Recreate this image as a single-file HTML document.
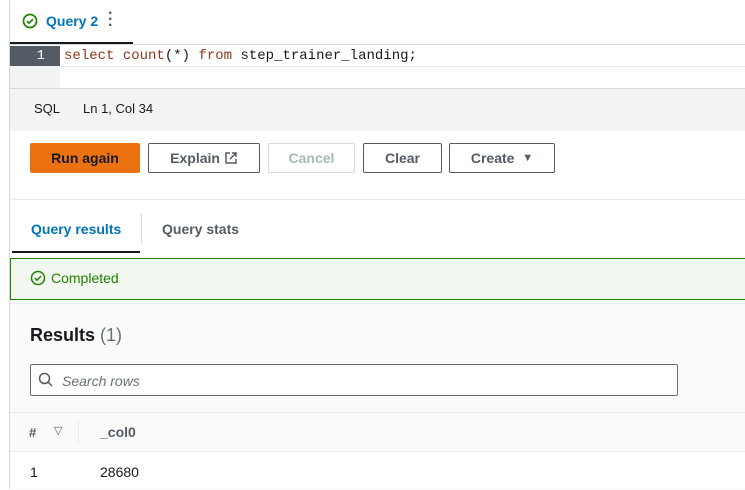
<!DOCTYPE html><html><head><style>
body{margin:0;width:745px;height:489px;overflow:hidden;background:#fff;font-family:"Liberation Sans",sans-serif;position:relative;font-size:14px;color:#16191f}
.a{position:absolute}
.btn{position:absolute;top:143px;height:30px;border:1px solid #545b64;border-radius:2px;box-sizing:border-box;font-weight:bold;font-size:14px;display:flex;align-items:center;justify-content:center;color:#545b64;background:#fff}
</style></head><body>
<div class="a" style="left:9px;top:0;width:1px;height:489px;background:#d5dbdb"></div>
<div class="a" style="left:10px;top:0;width:735px;height:44px;background:#fff"></div>
<svg class="a" style="left:22px;top:13px" width="16" height="16" viewBox="0 0 16 16"><circle cx="8" cy="8" r="6.5" fill="none" stroke="#1d8102" stroke-width="1.7"/><path d="M5 8.2l2 2 4-4" fill="none" stroke="#1d8102" stroke-width="1.7"/></svg>
<div class="a" style="left:46px;top:13px;font-weight:bold;color:#0073bb;font-size:14px">Query 2</div>
<div class="a" style="left:108px;top:11px;font-weight:bold;color:#545b64;font-size:16px;line-height:6px">·<br>·<br>·</div>
<div class="a" style="left:10px;top:42px;width:123px;height:2px;background:#16191f"></div>
<div class="a" style="left:10px;top:44px;width:735px;height:1px;background:#d5dbdb"></div>
<div class="a" style="left:10px;top:46px;width:50px;height:20px;background:#545b64;color:#fff;font-family:'Liberation Mono',monospace;font-size:14px;text-align:right;line-height:20px;padding-right:15px;box-sizing:border-box">1</div>
<div class="a" style="left:60px;top:46px;width:685px;height:20px;border-bottom:1px solid #eaeded"></div>
<div class="a" style="left:64px;top:46px;line-height:20px;font-family:'Liberation Mono',monospace;font-size:14px;color:#16191f"><span style="color:#8b3a1c">select</span> <span style="color:#8b3a1c">count</span>(*) <span style="color:#8b3a1c">from</span> step_trainer_landing;</div>
<div class="a" style="left:10px;top:66px;width:50px;height:22px;background:#f2f3f3"></div>
<div class="a" style="left:10px;top:88px;width:735px;height:42px;background:#f2f3f3;border-top:1px solid #d5dbdb"></div>
<div class="a" style="left:34px;top:101px;font-size:13px">SQL</div>
<div class="a" style="left:83px;top:101px;font-size:13px">Ln 1, Col 34</div>
<div class="btn" style="left:30px;width:110px;background:#ec7211;border-color:#ec7211;color:#16191f">Run again</div>
<div class="btn" style="left:148px;width:112px">Explain&nbsp;<svg width="14" height="14" viewBox="0 0 14 14"><path d="M6 2H2v10h10V8M8 2h4v4M12 2L6 8" fill="none" stroke="#545b64" stroke-width="1.5"/></svg></div>
<div class="btn" style="left:268px;width:87px;border-color:#d5dbdb;color:#aab7b8">Cancel</div>
<div class="btn" style="left:363px;width:79px">Clear</div>
<div class="btn" style="left:449px;width:106px">Create&nbsp;&nbsp;<span style="font-size:11px">▼</span></div>
<div class="a" style="left:10px;top:199px;width:735px;height:1px;background:#eaeded"></div>
<div class="a" style="left:31px;top:221px;font-weight:bold;color:#0073bb;font-size:14px">Query results</div>
<div class="a" style="left:141px;top:214px;width:1px;height:30px;background:#d5dbdb"></div>
<div class="a" style="left:162px;top:221px;font-weight:bold;color:#545b64;font-size:14px">Query stats</div>
<div class="a" style="left:12px;top:251px;width:128px;height:2px;background:#16191f"></div>
<div class="a" style="left:10px;top:258px;width:740px;height:42px;background:#f2f8f0;border:1px solid #1d8102;box-sizing:border-box"></div>
<svg class="a" style="left:30px;top:270px" width="16" height="16" viewBox="0 0 16 16"><circle cx="8" cy="8" r="6.5" fill="none" stroke="#1d8102" stroke-width="1.5"/><path d="M5 8.2l2 2 4-4" fill="none" stroke="#1d8102" stroke-width="1.5"/></svg>
<div class="a" style="left:51px;top:270px;color:#1d8102;font-size:14px">Completed</div>
<div class="a" style="left:10px;top:303px;width:735px;height:186px;background:#fafafa;border-top:1px solid #eaeded"></div>
<div class="a" style="left:30px;top:325px;font-size:18px;font-weight:bold">Results <span style="font-weight:normal;color:#687078">(1)</span></div>
<div class="a" style="left:30px;top:364px;width:648px;height:32px;border:1px solid #687078;border-radius:2px;background:#fff;box-sizing:border-box"></div>
<svg class="a" style="left:38px;top:372px" width="16" height="16" viewBox="0 0 16 16"><circle cx="6.5" cy="6.5" r="5" fill="none" stroke="#545b64" stroke-width="1.5"/><path d="M10 10l4 4" stroke="#545b64" stroke-width="1.5"/></svg>
<div class="a" style="left:62px;top:373px;font-style:italic;color:#687078;font-size:14px">Search rows</div>
<div class="a" style="left:10px;top:412px;width:735px;height:1px;background:#eaeded"></div>
<div class="a" style="left:29px;top:425px;font-weight:bold;color:#545b64;font-size:13px">#</div>
<div class="a" style="left:54px;top:424px;color:#545b64;font-size:11px">▽</div>
<div class="a" style="left:78px;top:420px;width:1px;height:24px;background:#eaeded"></div>
<div class="a" style="left:100px;top:424px;font-weight:bold;color:#545b64;font-size:14px">_col0</div>
<div class="a" style="left:10px;top:451px;width:735px;height:1px;background:#eaeded"></div>
<div class="a" style="left:10px;top:452px;width:735px;height:37px;background:#fff"></div>
<div class="a" style="left:30px;top:464px;font-size:14px">1</div>
<div class="a" style="left:100px;top:464px;font-size:14px">28680</div>
</body></html>
